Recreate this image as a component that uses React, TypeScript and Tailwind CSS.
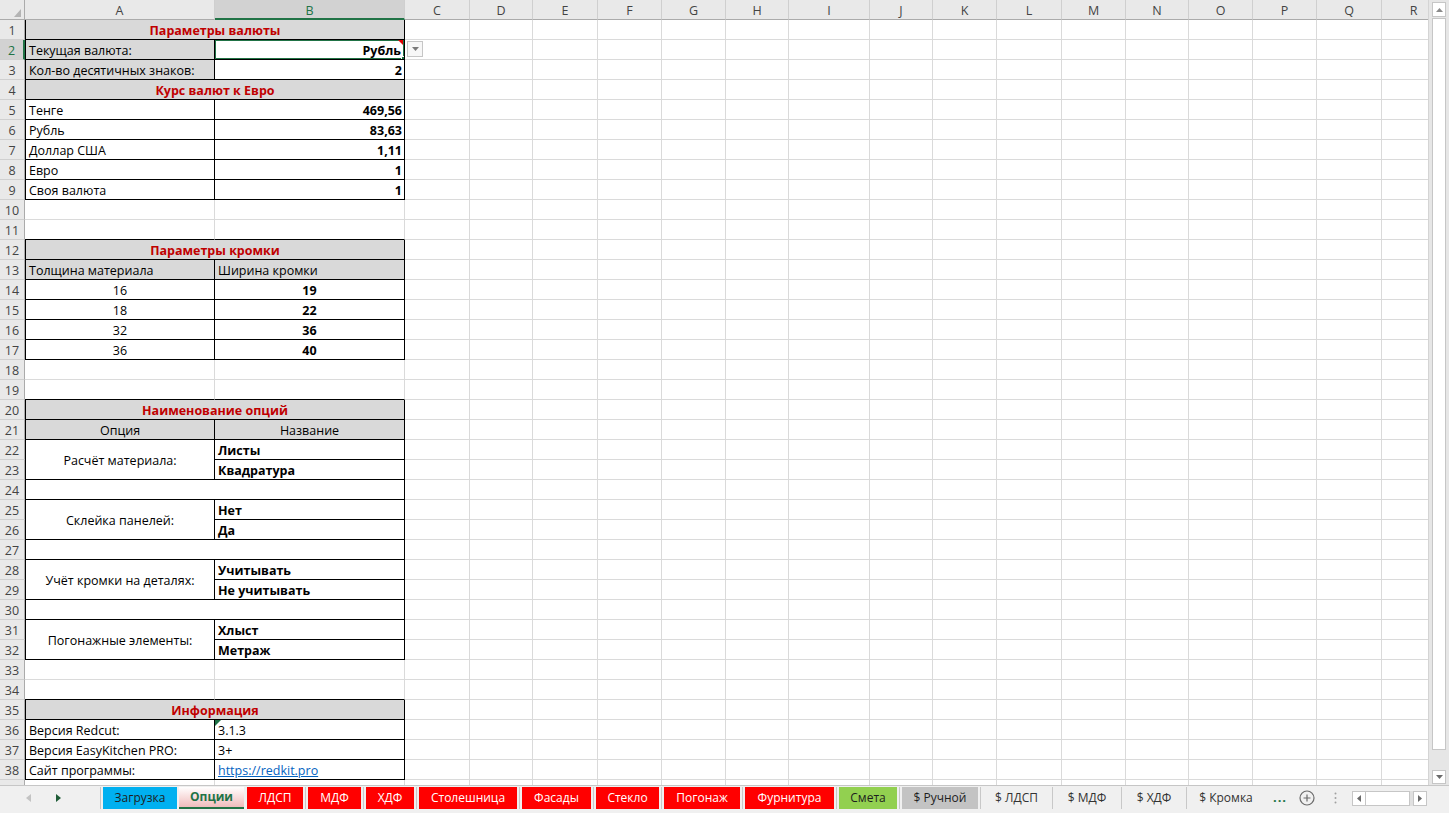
import React from 'react';

const CELL = 'flex items-center overflow-hidden whitespace-nowrap min-w-0 pt-[2px] leading-[15px]';
const GRID = 'border-r border-b border-[#dadada]';
const GRIDB = 'border-r border-b border-r-[#dadada] border-b-black';
const TB = 'border-r border-b border-black';
const TBL = 'border-l border-r border-b border-black';
const GRAY = 'bg-[#d9d9d9]';
const TITLE = 'bg-[#d9d9d9] text-[#c00000] font-bold justify-center';
const L = 'pl-[3px]';
const R = 'justify-end pr-[2px]';
const CTR = 'justify-center';

type RowDef = {
  merge?: boolean;
  a?: React.ReactNode;
  aCls?: string;
  b?: React.ReactNode;
  bCls?: string;
  aSpan?: boolean;
  skipA?: boolean;
  special?: 'sel' | 'tri';
};

const blank: RowDef = { aCls: GRID, bCls: GRID };
const blankB: RowDef = { aCls: GRIDB, bCls: GRIDB };
const title = (t: string): RowDef => ({ merge: true, a: t, aCls: `${TBL} ${TITLE}` });
const val = (a: string, b: string): RowDef => ({ a, aCls: `${TBL} ${L}`, b, bCls: `${TB} ${R} font-bold` });
const edge = (a: string, b: string): RowDef => ({ a, aCls: `${TBL} ${CTR}`, b, bCls: `${TB} ${CTR} font-bold` });
const opt = (a: string, b: string): RowDef => ({ a, aSpan: true, aCls: `${TBL} ${CTR}`, b, bCls: `${TB} ${L} font-bold` });
const opt2 = (b: string): RowDef => ({ skipA: true, b, bCls: `${TB} ${L} font-bold` });
const mergedEmpty: RowDef = { merge: true, aCls: TBL };
const info = (a: string, b: React.ReactNode, special?: 'tri'): RowDef => ({ a, aCls: `${TBL} ${L}`, b, bCls: `${TB} ${L}`, special });

const rows: RowDef[] = [
  title('Параметры валюты'),
  { a: 'Текущая валюта:', aCls: `${TBL} ${GRAY} ${L}`, b: 'Рубль', bCls: `${TB} justify-end pr-[3px] font-bold`, special: 'sel' },
  { a: 'Кол-во десятичных знаков:', aCls: `${TBL} ${GRAY} ${L}`, b: '2', bCls: `${TB} ${R} font-bold` },
  title('Курс валют к Евро'),
  val('Тенге', '469,56'),
  val('Рубль', '83,63'),
  val('Доллар США', '1,11'),
  val('Евро', '1'),
  val('Своя валюта', '1'),
  blank,
  blankB,
  title('Параметры кромки'),
  { a: 'Толщина материала', aCls: `${TBL} ${GRAY} ${L}`, b: 'Ширина кромки', bCls: `${TB} ${GRAY} ${L}` },
  edge('16', '19'),
  edge('18', '22'),
  edge('32', '36'),
  edge('36', '40'),
  blank,
  blankB,
  title('Наименование опций'),
  { a: 'Опция', aCls: `${TBL} ${GRAY} ${CTR}`, b: 'Название', bCls: `${TB} ${GRAY} ${CTR}` },
  opt('Расчёт материала:', 'Листы'),
  opt2('Квадратура'),
  mergedEmpty,
  opt('Склейка панелей:', 'Нет'),
  opt2('Да'),
  mergedEmpty,
  opt('Учёт кромки на деталях:', 'Учитывать'),
  opt2('Не учитывать'),
  mergedEmpty,
  opt('Погонажные элементы:', 'Хлыст'),
  opt2('Метраж'),
  blank,
  blankB,
  title('Информация'),
  info('Версия Redcut:', '3.1.3', 'tri'),
  info('Версия EasyKitchen PRO:', '3+'),
  info('Сайт программы:', <span className="underline text-[#0563c1]">https://redkit.pro</span>),
  blank,
];

const LETTERS = ['C', 'D', 'E', 'F', 'G', 'H', 'I', 'J', 'K', 'L', 'M', 'N', 'O', 'P', 'Q', 'R'];

function HeaderRow() {
  return (
    <>
      <div className="flex items-end justify-end pr-[3px] pb-[2px] bg-[#e9e9e9] border-r border-b border-[#ababab]">
        <svg width="7" height="8" viewBox="0 0 7 8">
          <path d="M7 0 L7 8 L0 8 Z" fill="#b4b4b4" />
        </svg>
      </div>
      <div className={`${CELL} justify-center bg-[#e9e9e9] text-[#444] border-r border-b border-r-[#cfcfcf] border-b-[#ababab]`}>A</div>
      <div className={`${CELL} justify-center bg-[#d2d2d2] text-[#217346] border-r border-b-2 border-r-[#cfcfcf] border-b-[#217346]`}>B</div>
      {LETTERS.map((l) => (
        <div key={l} className={`${CELL} justify-center bg-[#e9e9e9] text-[#444] border-r border-b border-r-[#cfcfcf] border-b-[#ababab]`}>
          {l}
        </div>
      ))}
    </>
  );
}

function Row({ n, d }: { n: number; d: RowDef }) {
  const sel = n === 2;
  return (
    <>
      <div
        className={`${CELL} justify-center border-b border-b-[#d0d0d0] ${
          sel ? 'bg-[#d2d2d2] text-[#217346] border-r-2 border-r-[#217346]' : 'bg-[#e9e9e9] text-[#444] border-r border-r-[#ababab]'
        }`}
      >
        {n < 39 ? n : null}
      </div>
      {d.merge ? (
        <div className={`${CELL} col-span-2 ${d.aCls ?? ''}`}>{d.a}</div>
      ) : (
        <>
          {!d.skipA && <div className={`${CELL} ${d.aSpan ? 'row-span-2' : ''} ${d.aCls ?? ''}`}>{d.a}</div>}
          <div className={`${CELL} relative ${d.bCls ?? ''}`}>
            {d.b}
            {d.special === 'sel' && (
              <>
                <div className="absolute -left-px -top-px -right-px -bottom-px border-2 border-[#217346] pointer-events-none z-10" />
                <div className="absolute right-[1px] top-0 z-20">
                  <svg width="5" height="5" viewBox="0 0 5 5">
                    <path d="M0 0 L5 0 L5 5 Z" fill="#e00000" />
                  </svg>
                </div>
                <div className="absolute -right-[4px] -bottom-[4px] w-[7px] h-[7px] bg-[#217346] border border-white z-20" />
              </>
            )}
            {d.special === 'tri' && (
              <div className="absolute left-0 top-0">
                <svg width="6" height="6" viewBox="0 0 6 6">
                  <path d="M0 0 L6 0 L0 6 Z" fill="#1e7145" />
                </svg>
              </div>
            )}
          </div>
        </>
      )}
      {LETTERS.map((l) =>
        sel && l === 'C' ? (
          <div key={l} className={`flex items-start pl-[2px] pt-px ${GRID}`}>
            <div className="w-[16px] h-[16px] border border-[#c6c6c6] bg-[#f7f7f7] flex items-center justify-center">
              <svg width="7" height="4" viewBox="0 0 7 4">
                <path d="M0 0 L7 0 L3.5 4 Z" fill="#7a7a7a" />
              </svg>
            </div>
          </div>
        ) : (
          <div key={l} className={GRID} />
        )
      )}
    </>
  );
}

function VScroll() {
  return (
    <div className="w-[21px] h-[785px] bg-[#e6e6e6] border-l border-[#d4d4d4] flex flex-col pl-[3px]">
      <div className="mt-[2px] w-[14px] h-[15px] bg-white border border-[#c6c6c6] flex items-center justify-center">
        <svg width="7" height="4" viewBox="0 0 7 4">
          <path d="M0 4 L7 4 L3.5 0 Z" fill="#8a8a8a" />
        </svg>
      </div>
      <div className="mt-px w-[14px] h-[732px] bg-white border border-[#c6c6c6]" />
      <div className="mt-auto mb-px w-[14px] h-[14px] bg-white border border-[#c6c6c6] flex items-center justify-center">
        <svg width="7" height="4" viewBox="0 0 7 4">
          <path d="M0 0 L7 0 L3.5 4 Z" fill="#6a6a6a" />
        </svg>
      </div>
    </div>
  );
}

type TabItem = { kind: 'tab'; t: string; cls: string } | { kind: 'sep'; cls: string; line: boolean };

const tabItems: TabItem[] = [
  { kind: 'tab', t: 'Загрузка', cls: 'w-[74px] bg-[#00b0f0] text-[#1e1e1e]' },
  { kind: 'sep', cls: 'w-[2px]', line: false },
  { kind: 'tab', t: 'Опции', cls: 'w-[65px] bg-linear-to-b from-white to-[#efbcbc] text-[#217346] font-bold border-b-2 border-[#217346]' },
  { kind: 'sep', cls: 'w-[3px]', line: false },
  { kind: 'tab', t: 'ЛДСП', cls: 'w-[56px] bg-[#ff0000] text-white' },
  { kind: 'sep', cls: 'w-[5px]', line: true },
  { kind: 'tab', t: 'МДФ', cls: 'w-[53px] bg-[#ff0000] text-white' },
  { kind: 'sep', cls: 'w-[5px]', line: true },
  { kind: 'tab', t: 'ХДФ', cls: 'w-[48px] bg-[#ff0000] text-white' },
  { kind: 'sep', cls: 'w-[5px]', line: true },
  { kind: 'tab', t: 'Столешница', cls: 'w-[98px] bg-[#ff0000] text-white' },
  { kind: 'sep', cls: 'w-[5px]', line: true },
  { kind: 'tab', t: 'Фасады', cls: 'w-[69px] bg-[#ff0000] text-white' },
  { kind: 'sep', cls: 'w-[5px]', line: true },
  { kind: 'tab', t: 'Стекло', cls: 'w-[63px] bg-[#ff0000] text-white' },
  { kind: 'sep', cls: 'w-[5px]', line: true },
  { kind: 'tab', t: 'Погонаж', cls: 'w-[76px] bg-[#ff0000] text-white' },
  { kind: 'sep', cls: 'w-[5px]', line: true },
  { kind: 'tab', t: 'Фурнитура', cls: 'w-[89px] bg-[#ff0000] text-white' },
  { kind: 'sep', cls: 'w-[5px]', line: true },
  { kind: 'tab', t: 'Смета', cls: 'w-[58px] bg-[#92d050] text-[#1e1e1e]' },
  { kind: 'sep', cls: 'w-[5px]', line: true },
  { kind: 'tab', t: '$ Ручной', cls: 'w-[76px] bg-[#c3c3c3] text-[#1e1e1e]' },
  { kind: 'sep', cls: 'w-[5px]', line: true },
  { kind: 'tab', t: '$ ЛДСП', cls: 'w-[67px] text-[#333]' },
  { kind: 'sep', cls: 'w-[5px]', line: true },
  { kind: 'tab', t: '$ МДФ', cls: 'w-[64px] text-[#333]' },
  { kind: 'sep', cls: 'w-[5px]', line: true },
  { kind: 'tab', t: '$ ХДФ', cls: 'w-[60px] text-[#333]' },
  { kind: 'sep', cls: 'w-[5px]', line: true },
  { kind: 'tab', t: '$ Кромка', cls: 'w-[74px] text-[#333]' },
];

function TabBar() {
  return (
    <div className="h-[28px] bg-[#f0f0f0] border-t border-[#c6c6c6] flex items-start pt-px text-[12px]">
      <div className="w-[100px] h-[22px] flex items-center shrink-0">
        <svg className="ml-[26px]" width="5" height="8" viewBox="0 0 5 8">
          <path d="M5 0 L0 4 L5 8 Z" fill="#c3c3c3" />
        </svg>
        <svg className="ml-[25px]" width="5" height="8" viewBox="0 0 5 8">
          <path d="M0 0 L5 4 L0 8 Z" fill="#1f5c37" />
        </svg>
      </div>
      <div className="w-px h-[22px] bg-[#c6c6c6] shrink-0" />
      <div className="w-[2px] shrink-0" />
      {tabItems.map((it, i) =>
        it.kind === 'tab' ? (
          <div key={i} className={`h-[22px] flex items-center justify-center shrink-0 whitespace-nowrap ${it.cls}`}>
            {it.t}
          </div>
        ) : (
          <div key={i} className={`h-[22px] flex justify-center shrink-0 ${it.cls}`}>
            {it.line && <div className="w-px h-full bg-[#c8c8c8]" />}
          </div>
        )
      )}
      <div className="ml-[5px] w-[24px] h-[22px] flex items-center justify-center shrink-0 text-[#217346] font-bold text-[13px] tracking-[1px]">
        ...
      </div>
      <div className="ml-[7px] w-[16px] h-[22px] flex items-center justify-center shrink-0">
        <svg width="16" height="16" viewBox="0 0 16 16">
          <circle cx="8" cy="8" r="7" fill="none" stroke="#6b6b6b" strokeWidth="1.2" />
          <path d="M8 4.5 V11.5 M4.5 8 H11.5" stroke="#6b6b6b" strokeWidth="1.2" />
        </svg>
      </div>
      <div className="ml-[15px] w-[10px] h-[22px] flex items-center justify-center shrink-0">
        <svg width="3" height="12" viewBox="0 0 3 12">
          <circle cx="1.5" cy="1.5" r="1" fill="#a0a0a0" />
          <circle cx="1.5" cy="6" r="1" fill="#a0a0a0" />
          <circle cx="1.5" cy="10.5" r="1" fill="#a0a0a0" />
        </svg>
      </div>
      <div className="ml-[12px] mt-[4px] h-[15px] flex shrink-0">
        <div className="w-[58px] h-[15px] flex bg-white border border-[#c6c6c6]">
          <div className="w-[13px] h-full border-r border-[#c6c6c6] flex items-center justify-center">
            <svg width="4" height="7" viewBox="0 0 4 7">
              <path d="M4 0 L0 3.5 L4 7 Z" fill="#6a6a6a" />
            </svg>
          </div>
        </div>
        <div className="w-[3px] h-[15px] bg-[#e0e0e0]" />
        <div className="w-[14px] h-[15px] bg-white border border-[#c6c6c6] flex items-center justify-center">
          <svg width="4" height="7" viewBox="0 0 4 7">
            <path d="M0 0 L4 3.5 L0 7 Z" fill="#6a6a6a" />
          </svg>
        </div>
      </div>
    </div>
  );
}

export default function App() {
  return (
    <div className="w-[1449px] h-[813px] overflow-hidden bg-white flex flex-col font-['Open_Sans',sans-serif] text-black">
      <div className="flex h-[785px] shrink-0">
        <div className="w-[1428px] h-[785px] overflow-hidden shrink-0">
          <div className="grid w-[1446px] grid-cols-[25px_190px_190px_65px_63px_65px_64px_64px_63px_81px_63px_64px_65px_64px_63px_64px_64px_65px_64px] auto-rows-[20px] text-[12.5px]">
            <HeaderRow />
            {rows.map((d, i) => (
              <Row key={i} n={i + 1} d={d} />
            ))}
          </div>
        </div>
        <VScroll />
      </div>
      <TabBar />
    </div>
  );
}
